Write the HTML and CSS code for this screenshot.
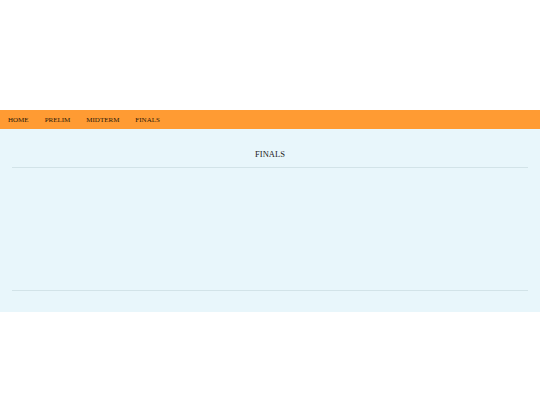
FILE: index.html
```html
<!DOCTYPE html>
<html>
<head>
<meta charset="utf-8">
<link rel="stylesheet" href="styles.css">
</head>
<body>
<header class="top"></header>
<nav class="nav">
  <a class="nav-item">HOME</a>
  <a class="nav-item">PRELIM</a>
  <a class="nav-item">MIDTERM</a>
  <a class="nav-item">FINALS</a>
</nav>
<main class="panel">
  <h2 class="title">FINALS</h2>
  <div class="body"></div>
  <div class="foot"></div>
</main>
</body>
</html>
```
FILE: styles.css
```css
html, body {
  margin: 0;
  padding: 0;
  background: #ffffff;
  font-family: "Liberation Serif", "Times New Roman", serif;
}
.top {
  height: 110px;
}
.nav {
  display: flex;
  align-items: center;
  gap: 16px;
  height: 19px;
  padding-left: 8px;
  background: #ff9b33;
}
.nav-item {
  font-size: 7px;
  color: #2a1a0a;
  text-decoration: none;
}
.panel {
  background: #e8f6fb;
  padding: 20px 12px 21px;
  display: flex;
  flex-direction: column;
}
.title {
  margin: 0;
  text-align: center;
  font-weight: normal;
  font-size: 8.5px;
  line-height: 10px;
  color: #222;
  padding-bottom: 8px;
  border-bottom: 1px solid #d2e3e8;
}
.body {
  height: 122px;
}
.foot {
  border-top: 1px solid #d2e3e8;
}
```
